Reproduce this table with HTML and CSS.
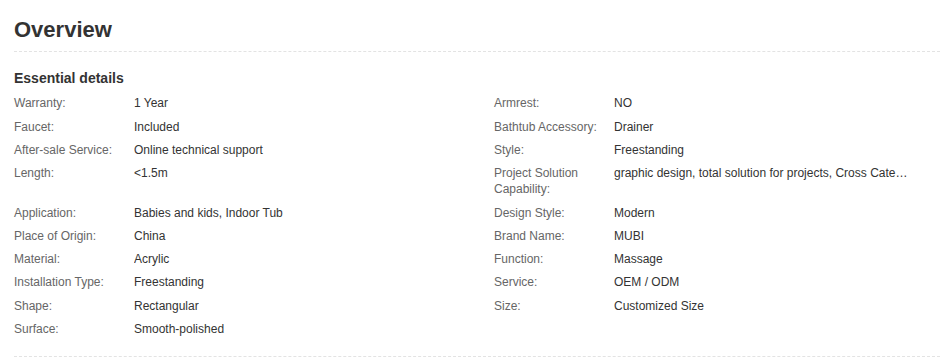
FILE: index.html
```html
<!DOCTYPE html>
<html lang="en">
<head>
    <meta charset="UTF-8">
    <meta name="viewport" content="width=device-width, initial-scale=1.0">
    <title>Overview</title>
    <link rel="stylesheet" href="styles.css">
</head>
<body>
    <div class="overview">
        <h1 class="overview-title">Overview</h1>

        <div class="attr-block">
            <h2 class="attr-title">Essential details</h2>
            <div class="attr-list">
                <div class="attr-item"><span class="attr-name">Warranty:</span><span class="attr-value">1 Year</span></div>
                <div class="attr-item"><span class="attr-name">Armrest:</span><span class="attr-value">NO</span></div>
                <div class="attr-item"><span class="attr-name">Faucet:</span><span class="attr-value">Included</span></div>
                <div class="attr-item"><span class="attr-name">Bathtub Accessory:</span><span class="attr-value">Drainer</span></div>
                <div class="attr-item"><span class="attr-name">After-sale Service:</span><span class="attr-value">Online technical support</span></div>
                <div class="attr-item"><span class="attr-name">Style:</span><span class="attr-value">Freestanding</span></div>
                <div class="attr-item"><span class="attr-name">Length:</span><span class="attr-value">&lt;1.5m</span></div>
                <div class="attr-item"><span class="attr-name">Project Solution Capability:</span><span class="attr-value">graphic design, total solution for projects, Cross Categories Consolidation</span></div>
                <div class="attr-item"><span class="attr-name">Application:</span><span class="attr-value">Babies and kids, Indoor Tub</span></div>
                <div class="attr-item"><span class="attr-name">Design Style:</span><span class="attr-value">Modern</span></div>
                <div class="attr-item"><span class="attr-name">Place of Origin:</span><span class="attr-value">China</span></div>
                <div class="attr-item"><span class="attr-name">Brand Name:</span><span class="attr-value">MUBI</span></div>
                <div class="attr-item"><span class="attr-name">Material:</span><span class="attr-value">Acrylic</span></div>
                <div class="attr-item"><span class="attr-name">Function:</span><span class="attr-value">Massage</span></div>
                <div class="attr-item"><span class="attr-name">Installation Type:</span><span class="attr-value">Freestanding</span></div>
                <div class="attr-item"><span class="attr-name">Service:</span><span class="attr-value">OEM / ODM</span></div>
                <div class="attr-item"><span class="attr-name">Shape:</span><span class="attr-value">Rectangular</span></div>
                <div class="attr-item"><span class="attr-name">Size:</span><span class="attr-value">Customized Size</span></div>
                <div class="attr-item"><span class="attr-name">Surface:</span><span class="attr-value">Smooth-polished</span></div>
            </div>
        </div>
    </div>
</body>
</html>
```

FILE: styles.css
```css
body {
    margin: 0;
    font-family: "Liberation Sans", Arial, sans-serif;
    color: #333;
    background: #fff;
    overflow: hidden;
}
.overview {
    padding-left: 14px;
}
.overview-title {
    margin: 0;
    padding: 16px 0 7px;
    font-size: 22px;
    line-height: 28px;
    font-weight: bold;
    color: #333;
    border-bottom: 1px dashed #e3e3e3;
}
.attr-block {
    padding-bottom: 15px;
    border-bottom: 1px dashed #e3e3e3;
}
.attr-title {
    margin: 17px 0 0;
    font-size: 14px;
    line-height: 18px;
    font-weight: bold;
    color: #333;
}
/* two columns of name/value pairs; long values are cut with an ellipsis */
.attr-list {
    display: grid;
    grid-template-columns: 480px 1fr;
    padding-top: 4.6px;
    padding-right: 32px;
}
.attr-item {
    display: flex;
    padding: 3.67px 0;
    font-size: 12px;
    line-height: 16px;
    min-width: 0;
}
.attr-name {
    flex: 0 0 120px;
    padding-right: 8px;
    box-sizing: border-box;
    color: #666;
}
.attr-value {
    flex: 1;
    min-width: 0;
    color: #333;
    white-space: nowrap;
    overflow: hidden;
    text-overflow: ellipsis;
}
```
